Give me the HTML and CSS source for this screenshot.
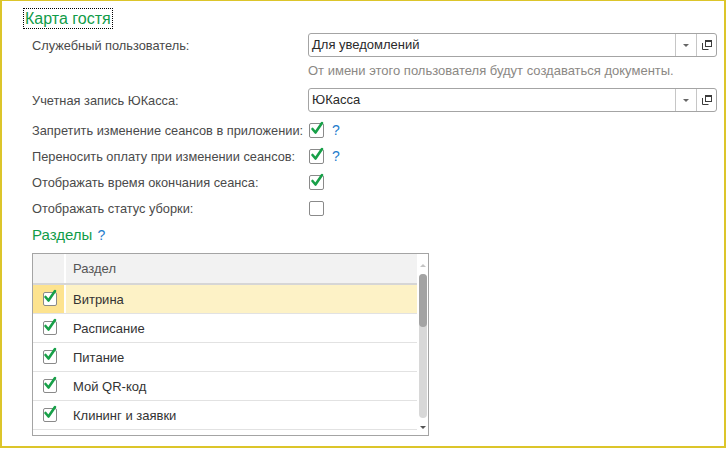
FILE: index.html
```html
<!DOCTYPE html>
<html lang="ru">
<head>
    <meta charset="UTF-8">
    <title>Карта гостя</title>
    <link rel="stylesheet" href="styles.css">
</head>
<body>
    <div class="frame">
        <div class="group-title"><span class="focus">Карта гостя</span></div>

        <div class="form">
            <div class="row">
                <div class="label">Служебный пользователь:</div>
                <div class="field">
                    <div class="value">Для уведомлений</div>
                    <div class="btn"><span class="arrow"></span></div>
                    <div class="btn">
                        <svg width="10" height="10" viewBox="0 0 10 10"><rect x="3.5" y="0.5" width="6" height="6" fill="none" stroke="#3c3c3c"/><path d="M3.5 1.5h6" stroke="#3c3c3c"/><path d="M0.5 3v6.5h6" fill="none" stroke="#3c3c3c"/></svg>
                    </div>
                </div>
            </div>
            <div class="hint">От имени этого пользователя будут создаваться документы.</div>
            <div class="row row-2">
                <div class="label">Учетная запись ЮКасса:</div>
                <div class="field">
                    <div class="value">ЮКасса</div>
                    <div class="btn"><span class="arrow"></span></div>
                    <div class="btn">
                        <svg width="10" height="10" viewBox="0 0 10 10"><rect x="3.5" y="0.5" width="6" height="6" fill="none" stroke="#3c3c3c"/><path d="M3.5 1.5h6" stroke="#3c3c3c"/><path d="M0.5 3v6.5h6" fill="none" stroke="#3c3c3c"/></svg>
                    </div>
                </div>
            </div>

            <div class="checks">
                <div class="check-row">
                    <div class="label">Запретить изменение сеансов в приложении:</div>
                    <span class="cb checked"><svg width="16" height="17" viewBox="0 0 16 17"><path d="M3.5 9l3 3.5 6.5-9.5" fill="none" stroke="#17a048" stroke-width="2.6" stroke-linecap="round" stroke-linejoin="round"/></svg></span>
                    <span class="help">?</span>
                </div>
                <div class="check-row">
                    <div class="label">Переносить оплату при изменении сеансов:</div>
                    <span class="cb checked"><svg width="16" height="17" viewBox="0 0 16 17"><path d="M3.5 9l3 3.5 6.5-9.5" fill="none" stroke="#17a048" stroke-width="2.6" stroke-linecap="round" stroke-linejoin="round"/></svg></span>
                    <span class="help">?</span>
                </div>
                <div class="check-row">
                    <div class="label">Отображать время окончания сеанса:</div>
                    <span class="cb checked"><svg width="16" height="17" viewBox="0 0 16 17"><path d="M3.5 9l3 3.5 6.5-9.5" fill="none" stroke="#17a048" stroke-width="2.6" stroke-linecap="round" stroke-linejoin="round"/></svg></span>
                </div>
                <div class="check-row">
                    <div class="label">Отображать статус уборки:</div>
                    <span class="cb"></span>
                </div>
            </div>
        </div>

        <div class="section-title">Разделы <span class="help">?</span></div>

        <div class="grid">
            <div class="grid-body">
                <div class="grid-head">
                    <div class="cell-mark"></div>
                    <div class="cell-name">Раздел</div>
                </div>
                <div class="grid-row selected">
                    <div class="cell-mark"><span class="cb checked"><svg width="16" height="17" viewBox="0 0 16 17"><path d="M3.5 9l3 3.5 6.5-9.5" fill="none" stroke="#17a048" stroke-width="2.6" stroke-linecap="round" stroke-linejoin="round"/></svg></span></div>
                    <div class="cell-name">Витрина</div>
                </div>
                <div class="grid-row">
                    <div class="cell-mark"><span class="cb checked"><svg width="16" height="17" viewBox="0 0 16 17"><path d="M3.5 9l3 3.5 6.5-9.5" fill="none" stroke="#17a048" stroke-width="2.6" stroke-linecap="round" stroke-linejoin="round"/></svg></span></div>
                    <div class="cell-name">Расписание</div>
                </div>
                <div class="grid-row">
                    <div class="cell-mark"><span class="cb checked"><svg width="16" height="17" viewBox="0 0 16 17"><path d="M3.5 9l3 3.5 6.5-9.5" fill="none" stroke="#17a048" stroke-width="2.6" stroke-linecap="round" stroke-linejoin="round"/></svg></span></div>
                    <div class="cell-name">Питание</div>
                </div>
                <div class="grid-row">
                    <div class="cell-mark"><span class="cb checked"><svg width="16" height="17" viewBox="0 0 16 17"><path d="M3.5 9l3 3.5 6.5-9.5" fill="none" stroke="#17a048" stroke-width="2.6" stroke-linecap="round" stroke-linejoin="round"/></svg></span></div>
                    <div class="cell-name">Мой QR-код</div>
                </div>
                <div class="grid-row">
                    <div class="cell-mark"><span class="cb checked"><svg width="16" height="17" viewBox="0 0 16 17"><path d="M3.5 9l3 3.5 6.5-9.5" fill="none" stroke="#17a048" stroke-width="2.6" stroke-linecap="round" stroke-linejoin="round"/></svg></span></div>
                    <div class="cell-name">Клининг и заявки</div>
                </div>
            </div>
            <div class="scrollbar">
                <span class="sb-up"></span>
                <div class="sb-track"><div class="sb-thumb"></div></div>
                <span class="sb-down"></span>
            </div>
        </div>
    </div>
</body>
</html>
```

FILE: styles.css
```css
:root {
    --frame-color: #dcc52a;
    --green: #109c48;
    --text: #4a4a4a;
    --border: #a4a4a4;
    --blue: #1e7ccc;
}

* {
    box-sizing: border-box;
}

body {
    margin: 0;
    background: #fff;
    font-family: "Liberation Sans", Arial, sans-serif;
    font-size: 13px;
    color: var(--text);
}

.frame {
    width: 726px;
    height: 448px;
    border: 2px solid var(--frame-color);
    border-top-width: 1px;
    padding: 8px 7px 0 20px;
    overflow: hidden;
}

/* Заголовок группы */
.group-title {
    height: 19px;
    line-height: 19px;
    padding-left: 2px;
}

.focus {
    display: inline-block;
    font-size: 16px;
    color: var(--green);
    outline: 1px dotted #000;
    padding: 0 1px;
}

.form {
    padding-left: 10px;
}

.row {
    display: flex;
    align-items: center;
    height: 24px;
    margin-top: 5px;
}

.row-2 {
    margin-top: 9px;
}

.label {
    width: 276px;
    flex-shrink: 0;
    white-space: nowrap;
    font-size: 12.8px;
}

.field {
    flex: 1;
    display: flex;
    height: 24px;
    border: 1px solid var(--border);
    border-radius: 3px;
    color: #2a2a2a;
}

.value {
    flex: 1;
    padding-left: 3px;
    line-height: 22px;
}

.btn {
    width: 21px;
    border-left: 1px solid #c6c6c6;
    display: flex;
    align-items: center;
    justify-content: center;
}

.btn:last-child {
    width: 20px;
}

.arrow {
    width: 0;
    height: 0;
    border-left: 3px solid transparent;
    border-right: 3px solid transparent;
    border-top: 3px solid #666;
}

.hint {
    margin-top: 6px;
    padding-left: 276px;
    line-height: 16px;
    color: #8b8884;
}

/* Флажки */
.checks {
    margin-top: 5px;
}

.check-row {
    display: flex;
    align-items: center;
    height: 26px;
}

.cb {
    position: relative;
    display: inline-block;
    width: 15px;
    height: 15px;
    margin-left: 1px;
    border: 1px solid #8a8a8a;
    border-radius: 2px;
    background: #fff;
}

.cb svg {
    position: absolute;
    left: -1px;
    top: -4px;
}

.help {
    color: var(--blue);
    font-size: 14px;
    margin-left: 8px;
}

.section-title {
    margin-top: 4px;
    padding-left: 10px;
    height: 20px;
    line-height: 20px;
    font-size: 15px;
    color: var(--green);
}

.section-title .help {
    margin-left: 1px;
}

/* Таблица разделов */
.grid {
    display: flex;
    width: 397px;
    height: 183px;
    margin: 8px 0 0 10px;
    border: 1px solid var(--border);
    overflow: hidden;
}

.grid-body {
    width: 384px;
}

.grid-head {
    display: flex;
    height: 31px;
    border-bottom: 2px solid #d6d6d6;
    color: #555;
}

.grid-head .cell-mark,
.grid-head .cell-name {
    background: #f2f2f2;
}

.cell-mark {
    width: 33px;
    flex-shrink: 0;
    border-right: 2px solid #fff;
    display: flex;
    align-items: center;
    justify-content: center;
}

.cell-name {
    flex: 1;
    padding-left: 7px;
    display: flex;
    align-items: center;
}

.grid-row {
    display: flex;
    height: 29px;
    border-bottom: 1px solid #e2e2e2;
    color: #333;
}

.grid-row .cb {
    width: 14px;
    height: 14px;
    margin: 0 0 0 2px;
}

.grid-row .cb svg {
    left: -2px;
    top: -5px;
}

.selected .cell-mark {
    background: #fde38f;
}

.selected .cell-name {
    background: #fdf2c6;
}

.scrollbar {
    flex: 1;
    display: flex;
    flex-direction: column;
    align-items: center;
    padding: 10px 0 6px;
}

.sb-up,
.sb-down {
    width: 0;
    height: 0;
    border-left: 3px solid transparent;
    border-right: 3px solid transparent;
}

.sb-up {
    border-bottom: 3px solid #c4c4c4;
}

.sb-down {
    border-top: 3px solid #555;
}

.sb-track {
    width: 8px;
    flex: 1;
    margin: 7px 0 8px;
    background: #d8d8d8;
    border-radius: 4px;
}

.sb-thumb {
    height: 53px;
    background: #a3a3a3;
    border-radius: 4px;
}
```
